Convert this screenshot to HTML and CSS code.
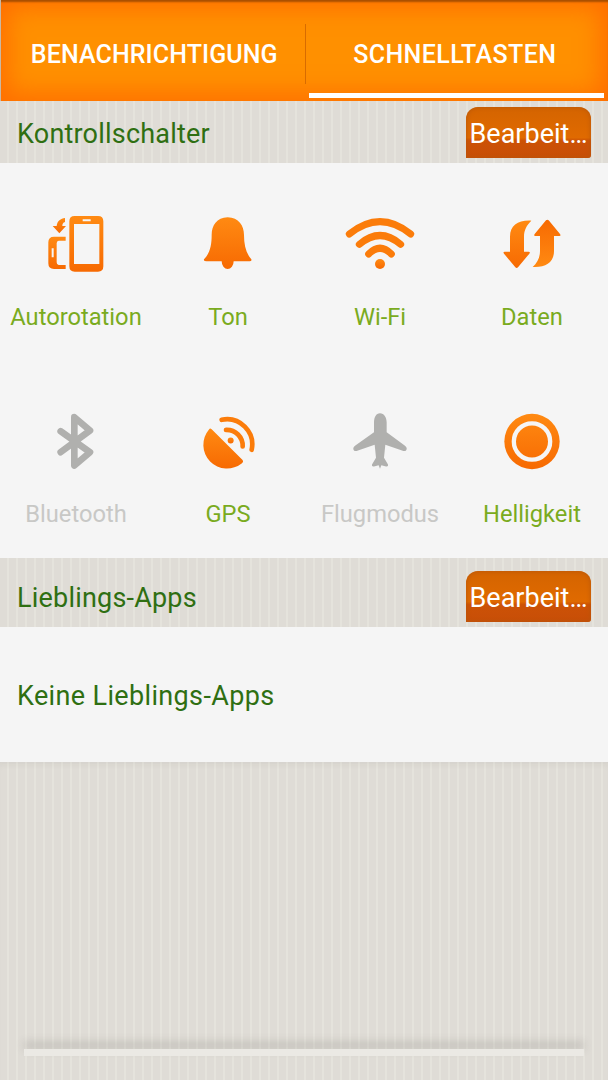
FILE: index.html
```html
<!DOCTYPE html>
<html lang="de">

<head>
    <meta charset="UTF-8">
    <meta name="viewport" content="width=device-width, initial-scale=1.0">
    <title>Schnelltasten</title>
    <link rel="stylesheet" href="styles.css">
</head>

<body>
    <div class="tabs">
        <div class="tab">BENACHRICHTIGUNG</div>
        <div class="tab tab-active">SCHNELLTASTEN</div>
    </div>

    <div class="section-head">
        <span class="section-title">Kontrollschalter</span>
        <button class="edit-button">Bearbeit…</button>
    </div>

    <div class="switches">
        <div class="switch">
            <svg class="icon" viewBox="48 39 180 180">
                <defs>
                    <linearGradient id="orange" x1="0" y1="0" x2="0" y2="1">
                        <stop offset="0" stop-color="#ff8a12" />
                        <stop offset="1" stop-color="#f76a02" />
                    </linearGradient>
                </defs>
                <path class="on" fill-rule="evenodd" d="M134 48H204Q220 48 220 64V199Q220 215 204 215H134Q118 215 118 199V64Q118 48 134 48ZM132 72V192H208V72ZM158 58V64H182V58Z" />
                <path class="on" fill-rule="evenodd" d="M107 110V122H86Q80 122 80 130V187Q80 195 86 195H107V207H72Q55 207 55 190V127Q55 110 72 110ZM65 145V172H71V145Z" />
                <path class="on" d="M105 54C92 56 82 62 80 78H68L88 100L108 78H97C97 72 99 68 105 66Z" />
            </svg>
            <span class="switch-label">Autorotation</span>
        </div>
        <div class="switch">
            <svg class="icon" viewBox="504 39 180 180">
                <path class="on" d="M593 52C560 52 545 78 545 105C545 135 540 160 522 178Q520 184 530 184H575A18 23 0 0 0 611 184H655Q667 184 664 178C648 160 642 135 642 105C642 78 626 52 593 52Z" />
            </svg>
            <span class="switch-label">Ton</span>
        </div>
        <div class="switch">
            <svg class="icon" viewBox="60 39 180 180">
                <g class="waves">
                    <path d="M58 102Q150 28 242 102" />
                    <path d="M88 133Q150 80 212 133" />
                    <path d="M116 162Q150 128 184 162" />
                </g>
                <circle class="on" cx="150" cy="192" r="15" />
            </svg>
            <span class="switch-label">Wi-Fi</span>
        </div>
        <div class="switch">
            <svg class="icon" viewBox="516 39 180 180">
                <path id="sync-arrow" class="on" d="M604 62C565 60 540 75 540 110V155H524Q518 155 522 161L556 202Q560 206 564 202L598 161Q602 155 596 155H582V110C582 90 590 75 604 62Z" />
                <use href="#sync-arrow" transform="rotate(180 606 131.5)" />
            </svg>
            <span class="switch-label">Daten</span>
        </div>

        <div class="switch switch-off">
            <svg class="icon" viewBox="48 31.5 180 180">
                <path class="bt" d="M92 92L180 155L133 195V50L180 90L92 155" />
            </svg>
            <span class="switch-label">Bluetooth</span>
        </div>
        <div class="switch">
            <svg class="icon" viewBox="504 31.5 180 180">
                <path class="on" d="M537 87Q540 82 545 86L637 178Q642 184 636 188A71 71 0 0 1 537 87Z" />
                <g class="waves waves-thin">
                    <path d="M575 58A76 76 0 0 1 665 148" />
                    <path d="M588 88A48 48 0 0 1 638 138" />
                </g>
                <circle class="on" cx="602" cy="120" r="9" />
            </svg>
            <span class="switch-label">GPS</span>
        </div>
        <div class="switch switch-off">
            <svg class="icon" viewBox="60 31.5 180 180">
                <path class="off" d="M150 38C138 38 132 50 132 65V95L76 135Q66 143 72 150Q76 153 84 150L134 133L138 172L126 192Q124 199 132 198L146 194L150 205L154 194L168 198Q176 199 174 192L162 172L166 133L216 150Q224 153 228 150Q234 143 224 135L170 95V65C170 50 162 38 150 38Z" />
            </svg>
            <span class="switch-label">Flugmodus</span>
        </div>
        <div class="switch">
            <svg class="icon" viewBox="516 31.5 180 180">
                <circle class="on" cx="606" cy="123" r="83" />
                <circle class="ring" cx="606" cy="123" r="54.5" />
            </svg>
            <span class="switch-label">Helligkeit</span>
        </div>
    </div>

    <div class="section-head section-head-tall">
        <span class="section-title">Lieblings-Apps</span>
        <button class="edit-button">Bearbeit…</button>
    </div>

    <div class="favourites">Keine Lieblings-Apps</div>

    <div class="bottom">
        <div class="handle"></div>
    </div>
</body>

</html>
```

FILE: styles.css
```css
html,
body {
    height: 100%;
}

body {
    display: flex;
    flex-direction: column;
    margin: 0;
    font-family: Roboto, "Liberation Sans", sans-serif;
    background-color: #dfdcd6;
    background-image: repeating-linear-gradient(90deg, #dfdcd6 0, #dfdcd6 7px, #e5e3dc 7px, #e5e3dc 9px);
}

/* top tab bar */
.tabs {
    display: flex;
    height: 101px;
    background: #ff9000;
    box-shadow: inset 1px 0 0 #c9b8a4, inset 0 3px 2px -1px #a84f00, inset 0 0 24px 8px #ff6f00;
}

.tab {
    flex: 1;
    display: flex;
    align-items: center;
    justify-content: center;
    padding: 7px 0 0 4px;
    box-sizing: border-box;
    color: #fff;
    font-size: 25px;
    font-weight: 500;
    letter-spacing: 0.1px;
}

.tab-active {
    position: relative;
    padding: 7px 3px 0 0;
    letter-spacing: 0.4px;
}

/* divider between the two tabs */
.tab-active::before {
    content: "";
    position: absolute;
    left: 0;
    top: 24px;
    height: 60px;
    width: 1px;
    background-color: #d86c00;
}

.tab-active::after {
    content: "";
    position: absolute;
    left: 4px;
    right: 4px;
    bottom: 3px;
    height: 5px;
    background-color: #fff;
}

.section-head {
    display: flex;
    align-items: center;
    justify-content: space-between;
    padding: 6px 17px 5px;
}

.section-head-tall {
    padding-top: 13px;
}

.section-title {
    padding-top: 2px;
    color: #2f6f12;
    font-size: 27px;
    letter-spacing: 0.2px;
}

.edit-button {
    width: 125px;
    height: 51px;
    padding: 2px 0 0;
    border: none;
    border-radius: 12px 12px 3px 0;
    color: #fff;
    font-family: inherit;
    font-size: 27px;
    white-space: nowrap;
    background: linear-gradient(#d46400 0, #e06a00 60%, #cc5206 66%, #c84e08 100%);
    box-shadow: inset 0 0 5px #b8560a;
}

.switches {
    display: grid;
    grid-template-columns: repeat(4, 152px);
    grid-auto-rows: 197.5px;
    background-color: #f5f5f5;
}

.switch {
    display: flex;
    flex-direction: column;
    align-items: center;
    padding-top: 50px;
    box-sizing: border-box;
}

.icon {
    width: 60px;
    height: 60px;
    overflow: visible;
}

.on {
    fill: url(#orange);
}

.off {
    fill: #b0b0ae;
}

.bt {
    fill: none;
    stroke: #b0b0ae;
    stroke-width: 20;
    stroke-linecap: round;
    stroke-linejoin: round;
}

.ring {
    fill: none;
    stroke: #f5f5f5;
    stroke-width: 13;
}

.waves {
    fill: none;
    stroke: #fb7c0a;
    stroke-width: 21;
    stroke-linecap: round;
}

.waves-thin {
    stroke-width: 14;
}

.switch-label {
    margin-top: 30px;
    color: #7aab1e;
    font-size: 23.7px;
    line-height: 28px;
}

.switch:nth-child(n + 5) .switch-label {
    margin-top: 29px;
}

.switch-off .switch-label {
    color: #c8c8c6;
}

.favourites {
    display: flex;
    align-items: center;
    height: 135px;
    padding: 2px 0 0 17px;
    box-sizing: border-box;
    color: #2f6f12;
    font-size: 27px;
    letter-spacing: 0.35px;
    background-color: #f5f5f5;
}

.bottom {
    flex: 1;
    display: flex;
    align-items: flex-end;
    padding: 0 24px 24px;
    box-shadow: inset 0 6px 6px -4px rgba(90, 88, 82, 0.08);
}

.handle {
    flex: 1;
    height: 7px;
    background-color: #ebe9e4;
    box-shadow: 0 -7px 9px rgba(90, 88, 82, 0.22);
}
```
